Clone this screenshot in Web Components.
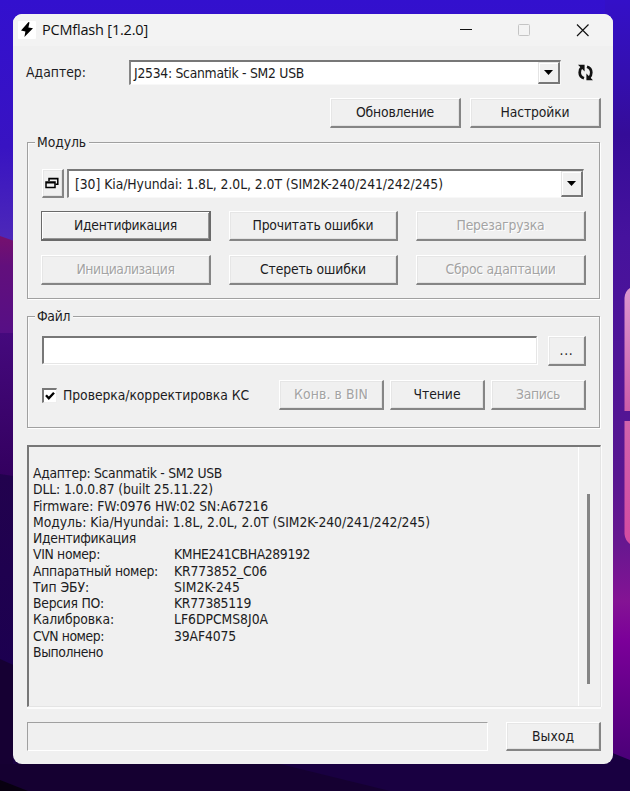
<!DOCTYPE html>
<html lang="ru">
<head>
<meta charset="utf-8">
<title>PCMflash</title>
<style>
html,body{margin:0;height:791px;overflow:hidden}
body{font:13.8px/16.25px "DejaVu Sans Condensed","DejaVu Sans",sans-serif;font-stretch:condensed;color:#1c1c22}
</style>
</head>
<body>
<desk-wallpaper>
<app-window>
  <title-bar slot="title"><fit-text w="106">PCMflash [1.2.0]</fit-text></title-bar>
  <flow-row style="margin:14px 11px 0 13px;height:25px">
    <fit-text w="60" style="width:103px">Адаптер:</fit-text>
    <combo-box style="width:432px;height:25px;--pad:3px"><fit-text w="170">J2534: Scanmatik - SM2 USB</fit-text></combo-box>
    <sync-icon style="margin-left:16px"></sync-icon>
  </flow-row>
  <flow-row style="margin:13px 12px 0 0;height:30px;gap:9px;justify-content:flex-end">
    <push-button style="width:131px"><fit-text w="78">Обновление</fit-text></push-button>
    <push-button style="width:131px"><fit-text w="69">Настройки</fit-text></push-button>
  </flow-row>
  <group-box style="margin:14px 13px 0 14px;height:157px">
    <fit-text slot="legend" w="49">Модуль</fit-text>
    <flow-row style="margin:26px 15px 0 14px;height:29px;gap:3px">
      <push-button style="width:22px"><cascade-icon></cascade-icon></push-button>
      <combo-box style="width:518px;height:29px;--pad:6px"><fit-text w="368">[30] Kia/Hyundai: 1.8L, 2.0L, 2.0T (SIM2K-240/241/242/245)</fit-text></combo-box>
    </flow-row>
    <button-grid>
      <push-button primary><fit-text w="103">Идентификация</fit-text></push-button>
      <push-button><fit-text w="121">Прочитать ошибки</fit-text></push-button>
      <push-button disabled><fit-text w="88">Перезагрузка</fit-text></push-button>
      <push-button disabled><fit-text w="98">Инициализация</fit-text></push-button>
      <push-button><fit-text w="106">Стереть ошибки</fit-text></push-button>
      <push-button disabled><fit-text w="110">Сброс адаптации</fit-text></push-button>
    </button-grid>
  </group-box>
  <group-box style="margin:17px 13px 0 14px;height:112px">
    <fit-text slot="legend" w="33">Файл</fit-text>
    <flow-row style="margin:19px 13px 0 14px;height:30px;gap:11px">
      <text-field style="width:495px;height:28px"></text-field>
      <push-button style="width:38px"><fit-text w="14">...</fit-text></push-button>
    </flow-row>
    <flow-row style="margin:14px 13px 0 14px;height:30px">
      <check-box><fit-text w="186">Проверка/корректировка КС</fit-text></check-box>
      <push-button disabled style="width:105px;margin-left:auto"><fit-text w="74">Конв. в BIN</fit-text></push-button>
      <push-button style="width:95px;margin-left:6px"><fit-text w="47">Чтение</fit-text></push-button>
      <push-button disabled style="width:95px;margin-left:6px"><fit-text w="44">Запись</fit-text></push-button>
    </flow-row>
  </group-box>
  <log-view style="margin:17px 12px 0 14px;height:262px">
    <log-line><fit-text w="189">Адаптер: Scanmatik - SM2 USB</fit-text></log-line>
    <log-line><fit-text w="180">DLL: 1.0.0.87 (built 25.11.22)</fit-text></log-line>
    <log-line><fit-text w="235">Firmware: FW:0976 HW:02 SN:A67216</fit-text></log-line>
    <log-line><fit-text w="397">Модуль: Kia/Hyundai: 1.8L, 2.0L, 2.0T (SIM2K-240/241/242/245)</fit-text></log-line>
    <log-line><fit-text w="103">Идентификация</fit-text></log-line>
    <log-line><fit-text w="67">VIN номер:</fit-text><fit-text slot="value" w="136">KMHE241CBHA289192</fit-text></log-line>
    <log-line><fit-text w="125">Аппаратный номер:</fit-text><fit-text slot="value" w="93">KR773852_C06</fit-text></log-line>
    <log-line><fit-text w="56">Тип ЭБУ:</fit-text><fit-text slot="value" w="66">SIM2K-245</fit-text></log-line>
    <log-line><fit-text w="71">Версия ПО:</fit-text><fit-text slot="value" w="77">KR77385119</fit-text></log-line>
    <log-line><fit-text w="81">Калибровка:</fit-text><fit-text slot="value" w="94">LF6DPCMS8J0A</fit-text></log-line>
    <log-line><fit-text w="71">CVN номер:</fit-text><fit-text slot="value" w="62">39AF4075</fit-text></log-line>
    <log-line><fit-text w="70">Выполнено</fit-text></log-line>
  </log-view>
  <flow-row style="margin:15px 12px 0 14px;height:29px;justify-content:space-between">
    <progress-track></progress-track>
    <push-button style="width:95px"><fit-text w="42">Выход</fit-text></push-button>
  </flow-row>
</app-window>
</desk-wallpaper>
<script>
const component = (name, markup, setup) => customElements.define(name, class extends HTMLElement {
  connectedCallback() {
    if (this.shadowRoot) return;
    this.attachShadow({mode: 'open'}).innerHTML = markup;
    if (setup) setup(this);
  }
});

component('desk-wallpaper', `<style>
:host{display:block;box-sizing:border-box;position:relative;width:630px;height:791px;padding:14px 17px 27px 13px;overflow:hidden}
svg{position:absolute;inset:0;z-index:-1}
</style>
<svg width="630" height="791" viewBox="0 0 630 791">
<defs>
<linearGradient id="l" x2="0" y2="1"><stop offset="0" stop-color="#3310ce"/><stop offset=".6" stop-color="#3813c2"/><stop offset="1" stop-color="#4e29b8"/></linearGradient>
<linearGradient id="m" x2="0" y2="1"><stop offset="0" stop-color="#76106e"/><stop offset=".3" stop-color="#620f7c"/><stop offset="1" stop-color="#560f86"/></linearGradient>
<linearGradient id="n" x2="0" y2="1"><stop offset="0" stop-color="#45097d"/><stop offset="1" stop-color="#33005f"/></linearGradient>
<linearGradient id="o" x2="0" y2="1"><stop offset="0" stop-color="#22024e"/><stop offset="1" stop-color="#1c0050"/></linearGradient>
<linearGradient id="r" x2="0" y2="1"><stop offset="0" stop-color="#3410c8"/><stop offset=".1" stop-color="#340fae"/><stop offset=".17" stop-color="#350c98"/><stop offset=".3" stop-color="#46129d"/><stop offset=".6" stop-color="#581691"/><stop offset=".69" stop-color="#681790"/><stop offset=".76" stop-color="#841394"/><stop offset=".81" stop-color="#7b0099"/><stop offset=".96" stop-color="#4b0078"/></linearGradient>
<linearGradient id="p" x2="0" y2="1"><stop offset="0" stop-color="#dc98cf"/><stop offset="1" stop-color="#cc5ca8"/></linearGradient>
<linearGradient id="q" x2="0" y2="1"><stop offset="0" stop-color="#d263ac"/><stop offset="1" stop-color="#d44aa0"/></linearGradient>
</defs>
<rect width="630" height="244" fill="url(#l)"/>
<path d="M0 236L20 243V336H0Z" fill="url(#m)"/>
<path d="M0 333H20V478H0Z" fill="url(#n)"/>
<path d="M0 474L20 477V670H0Z" fill="url(#o)"/>
<path d="M0 659L20 668V791H0Z" fill="#160033"/>
<rect x="605" width="25" height="791" fill="url(#r)"/>
<path d="M630 288Q625 291 624.500 298V411H630Z" fill="url(#p)"/>
<path d="M624.500 421H630V544Q625 540 624.500 534Z" fill="url(#q)"/>
<path d="M13 750H605L630 760V791H13Z" fill="#190041"/>
<path d="M0 764H280L390 791H0Z" fill="#150031"/>
<path d="M0 780L28 791H0Z" fill="#080010"/>
</svg><slot></slot>`);

component('app-window', `<style>
:host{display:flex;flex-direction:column;box-sizing:border-box;width:600px;height:750px;background:#f0f0f0;border-radius:9px;overflow:hidden}
</style><slot name="title"></slot><slot></slot>`);

component('title-bar', `<style>
:host{display:flex;align-items:center;height:32px;flex:none;background:#f3f3f3;color:#111;font:14.5px/20px "Open Sans",sans-serif;padding-left:5px}
.logo{margin-right:6px}.controls{margin-left:auto}
</style>
<svg class="logo" width="18" height="18" viewBox="0 0 18 18"><rect width="18" height="18" rx="1" fill="#fff"/><path d="M10.500 1L3 9.600L7.400 10.400L6.400 16L15 7.200L10.400 6.400L11.500 1.500Z" fill="#000"/></svg>
<slot></slot>
<svg class="controls" width="153" height="32" viewBox="0 0 153 32" fill="none"><path d="M0 15.500H12" stroke="#111"/><rect x="58.500" y="10.500" width="11" height="11" rx="1" stroke="#c4c4c4"/><path d="M117 10.500L128.500 22M128.500 10.500L117 22" stroke="#111" stroke-width="1.150"/></svg>`);

component('flow-row', `<style>:host{display:flex;align-items:stretch;flex:none}</style><slot></slot>`);

component('push-button', `<style>
:host{display:flex;align-items:center;justify-content:center;box-sizing:border-box;background:#f0f0f0;
border:solid;border-width:1px 2px 2px 1px;border-color:#fff #858585 #858585 #fff;box-shadow:inset 1px 1px #e6e6e6,inset -1px -1px #e2e2e2}
:host([primary]){border-width:1px 2px 2px 1px;border-color:#6a6a6a;box-shadow:inset 1px 1px #fff,inset -1px -1px #959595}
:host([disabled]){color:#a3a3a3;text-shadow:1px 1px #fff}
</style><slot></slot>`);

component('combo-box', `<style>
:host{display:flex;align-items:center;box-sizing:border-box;background:#fff;border:solid;border-width:2px 1px 1px 2px;border-color:#777 #f8f8f8 #f8f8f8 #858585}
.text{padding-left:var(--pad);flex:1}
.arrow{align-self:stretch;width:22px;box-sizing:border-box;display:grid;place-items:center;background:#f0f0f0;border:solid;border-width:1px 2px 2px 1px;border-color:#e4e4e4 #777 #777 #e4e4e4;box-shadow:inset 1px 1px #fff}
</style><span class="text"><slot></slot></span><span class="arrow"><svg width="9" height="5"><path d="M0 0H9L4.500 5Z" fill="#000"/></svg></span>`);

component('sync-icon', `<style>:host{display:flex;align-items:center}</style>
<svg width="17" height="17" viewBox="0 0 17 17"><path d="M7 14.300Q2.700 13 2.700 8.500Q2.700 5 4.800 3.200M10 2.700Q14.300 4 14.300 8.500Q14.300 12 12.200 13.800" fill="none" stroke="#111" stroke-width="2.700"/><path d="M1 .8H7.600V7.600ZM16 16.200H9.400V9.400Z" fill="#111"/></svg>`);

component('cascade-icon', `<style>:host{display:flex}</style>
<svg width="14" height="12" viewBox="0 0 14 12" fill="none" stroke="#000" stroke-width="1.500"><path d="M4 4V1.500H12.800V7.200H10.500M4 1.800H12.800" /><rect x="1" y="5" width="9" height="5.500"/><path d="M1 5.800H10"/></svg>`);

component('group-box', `<style>
:host{display:block;box-sizing:border-box;position:relative;border:1px solid #a0a0a0;box-shadow:1px 1px #fff,inset 1px 1px #fbfbfb;flex:none}
.legend{position:absolute;left:7px;top:-9px;background:#f0f0f0;padding:0 3px 0 2px}
.body{display:flow-root}
</style><span class="legend"><slot name="legend"></slot></span><div class="body"><slot></slot></div>`);

component('button-grid', `<style>
:host{display:grid;grid-template-columns:170px 169px 170px;grid-auto-rows:30px;gap:13.500px 18px;margin:13px 13px 0 13px}
</style><slot></slot>`);

component('text-field', `<style>
:host{display:block;box-sizing:border-box;background:#fff;border:solid;border-width:2px 1px 1px 2px;border-color:#777 #e6e6e6 #e6e6e6 #777;box-shadow:1px 1px #fff}
</style>`);

component('check-box', `<style>
:host{display:flex;align-items:center;gap:6px}
.mark{width:15px;height:15px;box-sizing:border-box;background:#fff;border:solid;border-width:2px 1px 1px 2px;border-color:#777 #eee #eee #777;display:grid;place-items:center}
</style><span class="mark"><svg width="10" height="10" viewBox="0 0 10 10"><path d="M1 4.200L3.800 7.200L9 1.700" fill="none" stroke="#000" stroke-width="2.400"/></svg></span><slot></slot>`);

component('log-view', `<style>
:host{display:flex;flex:none;box-sizing:border-box;border:solid;border-width:2px 1px 1px 2px;border-color:#777 #e4e4e4 #e4e4e4 #777;box-shadow:0 2px #fbfbfb,1px 0 #fbfbfb}
.lines{flex:1;padding:18px 0 0 4px}
.scroll{width:22px;box-sizing:border-box;border-left:1px solid #fff;padding:47px 0 0 8px}
.thumb{width:3px;height:190px;background:#858585}
</style><div class="lines"><slot></slot></div><div class="scroll"><div class="thumb"></div></div>`);

component('log-line', `<style>
:host{display:grid;grid-template-columns:141px 1fr;height:16.250px;white-space:nowrap}
</style><span><slot></slot></span><span><slot name="value"></slot></span>`);

component('progress-track', `<style>
:host{display:block;box-sizing:border-box;width:461px;height:29px;border:1px solid;border-color:#a0a0a0 #fff #fff #a0a0a0}
</style>`);

// Tracks its text so that the run occupies exactly the width given in "w".
component('fit-text', `<style>
:host{display:inline-block;white-space:nowrap;align-self:center}
span{display:inline-block}
</style><span><slot></slot></span>`, host => {
  const run = host.shadowRoot.querySelector('span');
  const target = +host.getAttribute('w');
  const count = host.textContent.length;
  const natural = run.getBoundingClientRect().width;
  run.style.letterSpacing = (target - natural) / count + 'px';
});
</script>
</body>
</html>
